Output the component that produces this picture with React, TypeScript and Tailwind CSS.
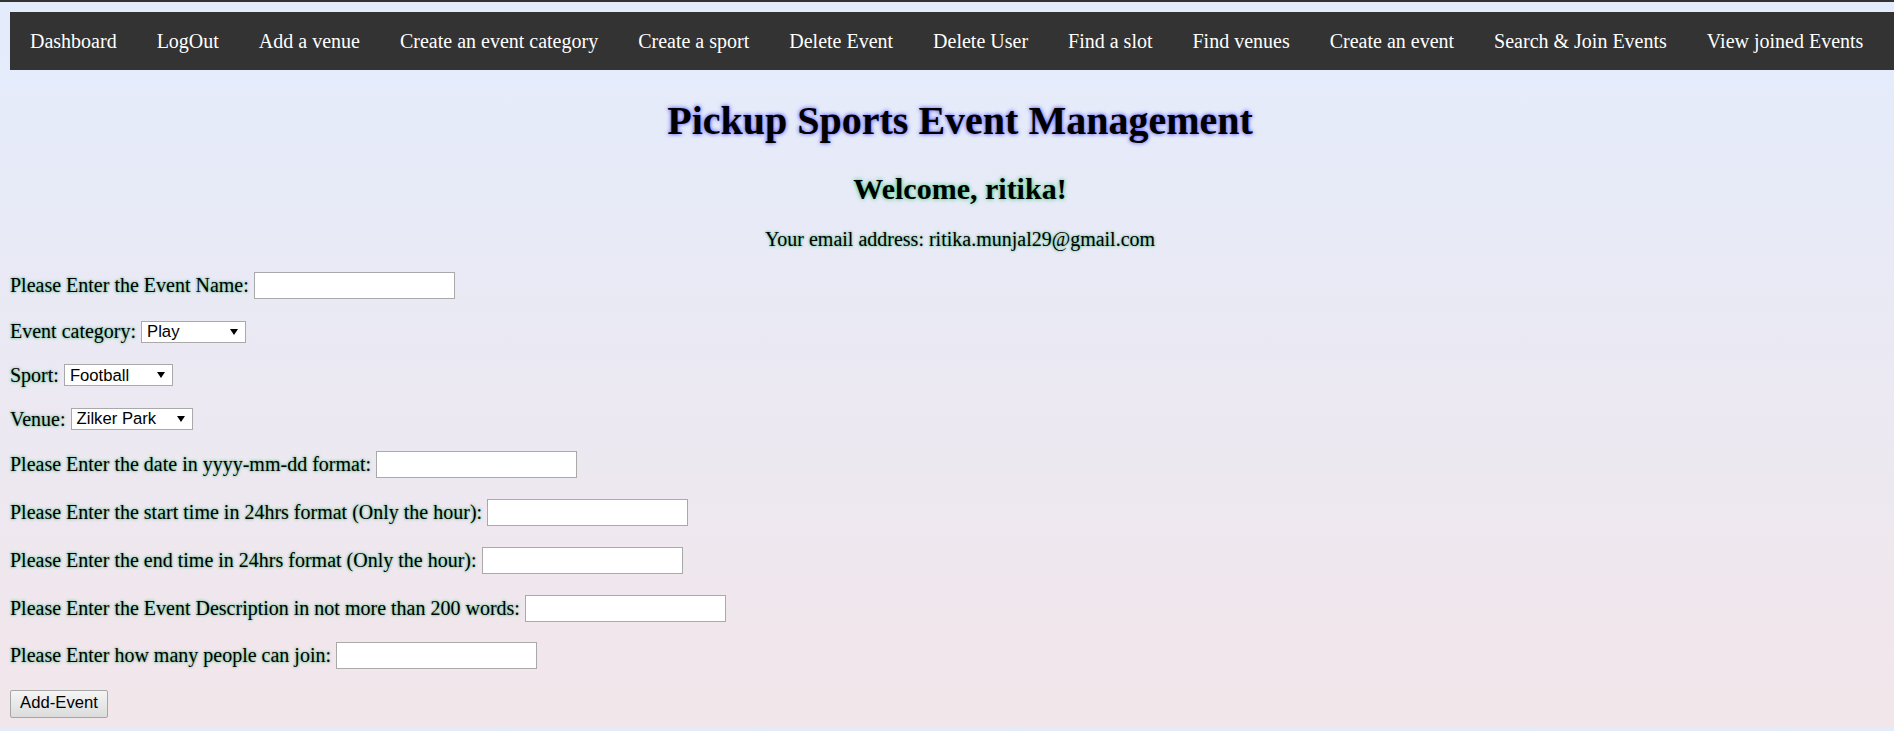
import React from 'react';

const navItems = [
  'Dashboard',
  'LogOut',
  'Add a venue',
  'Create an event category',
  'Create a sport',
  'Delete Event',
  'Delete User',
  'Find a slot',
  'Find venues',
  'Create an event',
  'Search & Join Events',
  'View joined Events',
];

const labelCls = "whitespace-nowrap leading-[23px] text-black [text-shadow:0_0_3px_#2aa866]";

const TextBox: React.FC = () => (
  <input
    type="text"
    className="h-[27px] w-[201px] border border-[#a9a9a9] bg-white px-[2px] font-['Liberation_Sans',sans-serif] text-[16.67px] outline-none"
  />
);

const FakeSelect: React.FC<{ value: string; width: string }> = ({ value, width }) => (
  <span
    className={`inline-flex h-[22px] items-center justify-between border border-[#a9a9a9] bg-white pl-[5px] pr-[7px] font-['Liberation_Sans',sans-serif] text-[16.67px] leading-none text-black ${width}`}
  >
    <span className="pt-[1px]">{value}</span>
    <svg width="8" height="6" viewBox="0 0 8 6" className="shrink-0">
      <path d="M0 0 H8 L4 6 Z" fill="#000" />
    </svg>
  </span>
);

const InputRow: React.FC<{ label: string }> = ({ label }) => (
  <div className="flex h-[28px] items-center gap-[5px]">
    <span className={labelCls}>{label}</span>
    <TextBox />
  </div>
);

const SelectRow: React.FC<{ label: string; value: string; width: string }> = ({ label, value, width }) => (
  <div className="flex h-[24px] items-center gap-[5px]">
    <span className={labelCls}>{label}</span>
    <FakeSelect value={value} width={width} />
  </div>
);

export default function App() {
  return (
    <div className="h-[731px] w-full overflow-hidden bg-[#e3ecfb] font-['Liberation_Serif',serif] text-[20px]">
      <div className="h-[727px] w-[1920px] bg-linear-to-b from-[#e3ecfc] to-[#f2e6ea]">
        <div className="h-[2px] bg-[#333]" />

        <div className="pl-[10px] pt-[10px]">
          <nav className="flex bg-[#333]">
            {navItems.map((item) => (
              <a
                key={item}
                href="#"
                className="whitespace-nowrap px-[20px] py-[17.5px] leading-[23px] text-white"
              >
                {item}
              </a>
            ))}
          </nav>

          <div className="w-[1900px]">
            <h1 className="mt-[27.5px] text-center text-[40px] font-bold leading-[46px] text-black [text-shadow:0_0_4px_#3a3aff]">
              Pickup Sports Event Management
            </h1>
            <h2 className="mt-[28.4px] text-center text-[30px] font-bold leading-[34px] text-black [text-shadow:0_0_4px_#22c06a]">
              Welcome, ritika!
            </h2>
            <p className="mt-[22.35px] text-center leading-[23px] text-black [text-shadow:0_0_3px_#2aa866]">
              Your email address: ritika.munjal29@gmail.com
            </p>
          </div>

          <form className="mt-[20.75px] flex flex-col items-start gap-[19.75px]">
            <InputRow label="Please Enter the Event Name:" />
            <SelectRow label="Event category:" value="Play" width="w-[105px]" />
            <SelectRow label="Sport:" value="Football" width="w-[109px]" />
            <SelectRow label="Venue:" value="Zilker Park" width="w-[122px]" />
            <InputRow label="Please Enter the date in yyyy-mm-dd format:" />
            <InputRow label="Please Enter the start time in 24hrs format (Only the hour):" />
            <InputRow label="Please Enter the end time in 24hrs format (Only the hour):" />
            <InputRow label="Please Enter the Event Description in not more than 200 words:" />
            <InputRow label="Please Enter how many people can join:" />
            <button
              type="button"
              className="h-[28px] w-[98px] rounded-[2px] border border-[#a6a6a6] bg-linear-to-b from-[#f5f5f5] to-[#dcdcdc] font-['Liberation_Sans',sans-serif] text-[16.67px] leading-none text-black"
            >
              Add-Event
            </button>
          </form>
        </div>
      </div>
    </div>
  );
}
